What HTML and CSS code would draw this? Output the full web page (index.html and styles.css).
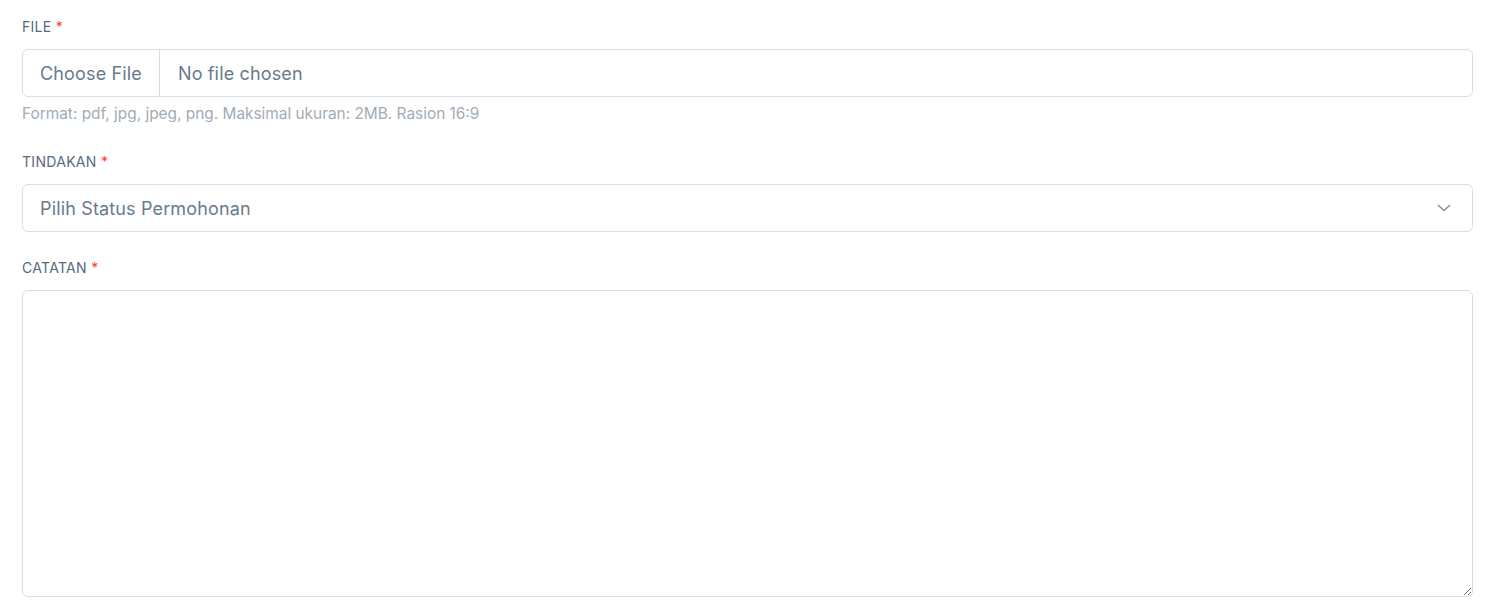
FILE: index.html
```html
<!DOCTYPE html>
<html lang="id">
<head>
<meta charset="utf-8">
<link rel="stylesheet" href="styles.css">
</head>
<body>
<form class="form">
  <div class="field">
    <label class="label">FILE <span class="req">*</span></label>
    <div class="control file-control">
      <span class="file-btn">Choose File</span>
      <span class="file-name">No file chosen</span>
    </div>
    <div class="help">Format: pdf, jpg, jpeg, png. Maksimal ukuran: 2MB. Rasion 16:9</div>
  </div>
  <div class="field">
    <label class="label">TINDAKAN <span class="req">*</span></label>
    <div class="control select-control">
      <span class="select-text">Pilih Status Permohonan</span>
      <svg class="chev" width="16" height="16" viewBox="0 0 16 16" fill="none"><path d="M2.5 5.5 8 10.5 13.5 5.5" stroke="#8592a3" stroke-width="1.6" stroke-linecap="round" stroke-linejoin="round"/></svg>
    </div>
  </div>
  <div class="field">
    <label class="label">CATATAN <span class="req">*</span></label>
    <textarea class="textarea"></textarea>
  </div>
</form>
</body>
</html>
```

FILE: styles.css
```css
* { box-sizing: border-box; }
html, body { margin: 0; background: #fff; }
body {
  font-family: Inter, "Noto Sans", "Liberation Sans", sans-serif;
  color: #697a8d;
  padding: 18px 15px 0 22px;
}
.form { display: flex; flex-direction: column; }
.field { display: flex; flex-direction: column; margin-bottom: 27px; }
.label {
  font-size: 14px;
  color: #566a7f;
  letter-spacing: 0.3px;
  line-height: 18px;
  margin-bottom: 13px;
}
.req { color: #ff3e1d; }
.control {
  height: 48px;
  border: 1px solid #d9dee3;
  border-radius: 6px;
  display: flex;
  align-items: center;
  font-size: 18px;
  letter-spacing: 0.15px;
  color: #697a8d;
}
.file-btn {
  height: 100%;
  display: flex;
  align-items: center;
  padding: 0 17px;
  border-right: 1px solid #d9dee3;
}
.file-name { padding-left: 18px; }
.help {
  font-size: 15.4px;
  color: #a1acb8;
  margin-top: 7px;
  line-height: 20px;
  margin-bottom: 2px;
}
.select-control { justify-content: space-between; padding: 0 20px 0 17px; }
.textarea {
  height: 307px;
  border: 1px solid #d9dee3;
  border-radius: 6px;
  font-family: inherit;
  font-size: 18px;
  resize: vertical;
  outline: none;
}
```
